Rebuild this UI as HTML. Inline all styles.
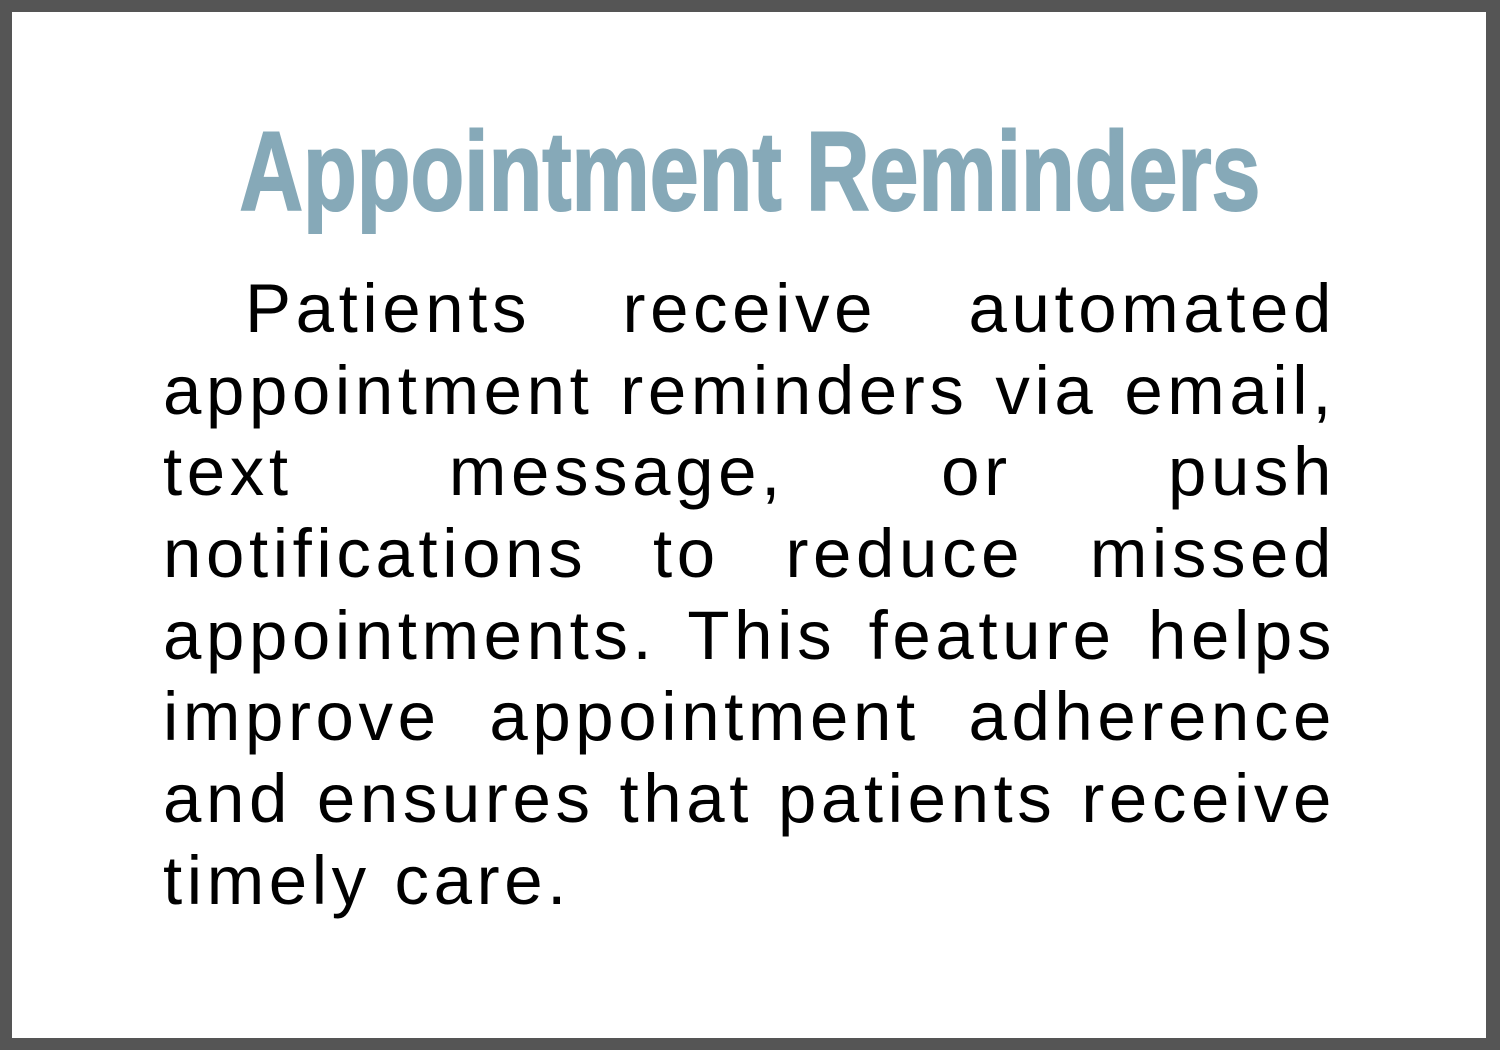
<!DOCTYPE html>
<html><head><meta charset="utf-8"><style>
html,body{margin:0;padding:0}
body{width:1500px;height:1050px;background:#555;position:relative;overflow:hidden}
.card{position:absolute;left:12px;top:12px;width:1474px;height:1026px;background:#fff}
.title{position:absolute;left:0;width:1500px;top:112px;text-align:center;font-family:"Liberation Sans",sans-serif;font-weight:bold;font-size:112px;line-height:120px;color:#86a9b8;transform:scaleX(0.785);-webkit-text-stroke:2px #86a9b8}
.body{position:absolute;left:163px;top:268px;width:1173px;font-family:"Liberation Sans",sans-serif;font-size:69px;line-height:81.7px;color:#000;letter-spacing:4.6px}
.l{text-align:justify;text-align-last:justify;height:81.7px;white-space:nowrap}
.last{text-align:left;text-align-last:left}
</style></head><body>
<div class="card"></div>
<div class="title">Appointment Reminders</div>
<div class="body">
<div class="l" style="padding-left:82px">Patients receive automated</div>
<div class="l">appointment reminders via email,</div>
<div class="l">text message, or push</div>
<div class="l">notifications to reduce missed</div>
<div class="l">appointments. This feature helps</div>
<div class="l">improve appointment adherence</div>
<div class="l">and ensures that patients receive</div>
<div class="l last">timely care.</div>
</div>
</body></html>
